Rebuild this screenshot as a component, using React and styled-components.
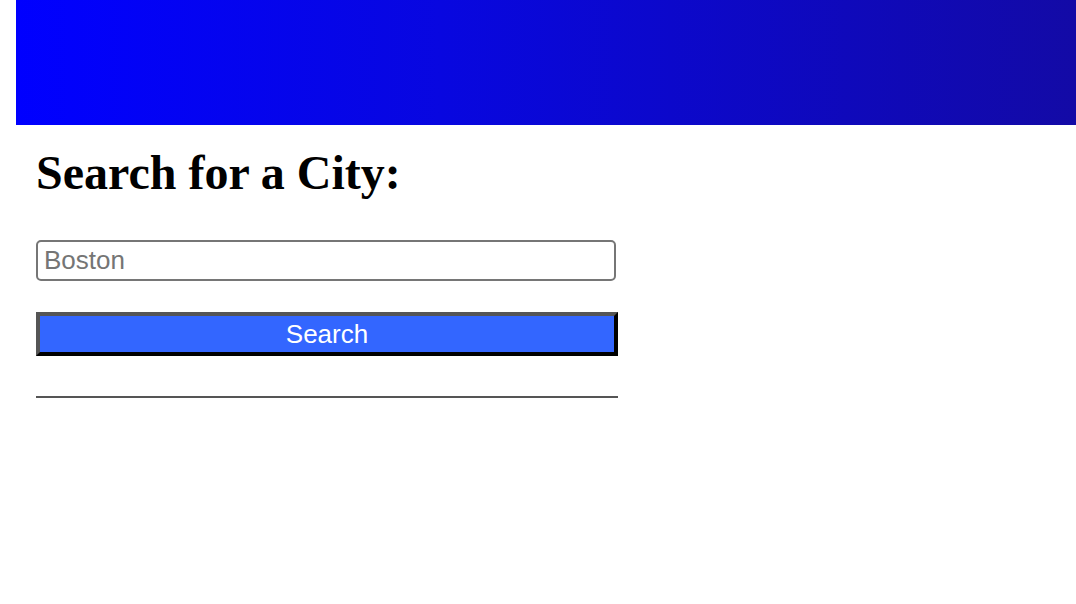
import React from 'react';
import styled, { createGlobalStyle } from "styled-components";

const GlobalStyle = createGlobalStyle`
  html, body {
    margin: 0;
    padding: 0;
    background: #fff;
  }
  body {
    font-family: "Liberation Serif", "Times New Roman", serif;
  }
`;

export default () => {
  return (
    <AppDiv>
      <GlobalStyle />
      <Header />
      <Main>
        <Title>Search for a City:</Title>
        <CityInput type="text" placeholder="Boston" />
        <SearchButton type="button">Search</SearchButton>
        <Divider />
      </Main>
    </AppDiv>
  );
}

const AppDiv = styled.div`
  width: 100%;
  display: flex;
  flex-direction: column;
  padding-left: 16px;
  box-sizing: border-box;
`;

const Header = styled.header`
  height: 125px;
  background: linear-gradient(to right, #0000ff 0%, #0807e0 40%, #130aa6 100%);
`;

const Main = styled.main`
  width: 582px;
  padding: 0 20px;
  display: flex;
  flex-direction: column;
`;

const Title = styled.h1`
  margin: 21px 0 0;
  font-family: "Liberation Serif", "Times New Roman", serif;
  font-size: 48px;
  font-weight: bold;
  line-height: 53px;
  color: #000;
`;

const CityInput = styled.input`
  margin-top: 41px;
  width: 580px;
  height: 41px;
  box-sizing: border-box;
  border: 2px solid #767676;
  border-radius: 5px;
  padding: 0 6px;
  font-family: "Liberation Sans", Arial, sans-serif;
  font-size: 26px;
  color: #000;
  outline: none;

  &::placeholder {
    color: #757575;
  }
`;

const SearchButton = styled.button`
  margin-top: 31px;
  width: 582px;
  height: 44px;
  box-sizing: border-box;
  border: 4px solid;
  border-color: #555 #000 #000 #555;
  background: #3366ff;
  color: #fff;
  font-family: "Liberation Sans", Arial, sans-serif;
  font-size: 26px;
  padding: 0;
  line-height: 36px;
  cursor: pointer;
`;

const Divider = styled.hr`
  margin: 40px 0 0;
  width: 582px;
  height: 0;
  border: none;
  border-top: 2px solid #555;
`;
